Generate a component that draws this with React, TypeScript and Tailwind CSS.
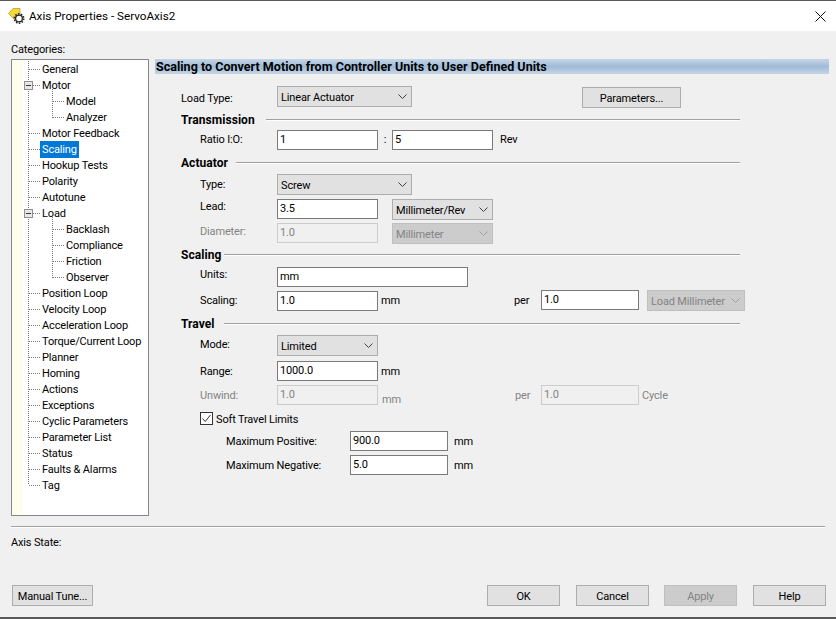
import type { ReactNode } from "react";

const tree = [
  { label: "General", kind: "top" },
  { label: "Motor", kind: "parent" },
  { label: "Model", kind: "child" },
  { label: "Analyzer", kind: "lastChild" },
  { label: "Motor Feedback", kind: "top" },
  { label: "Scaling", kind: "top", selected: true },
  { label: "Hookup Tests", kind: "top" },
  { label: "Polarity", kind: "top" },
  { label: "Autotune", kind: "top" },
  { label: "Load", kind: "parent" },
  { label: "Backlash", kind: "child" },
  { label: "Compliance", kind: "child" },
  { label: "Friction", kind: "child" },
  { label: "Observer", kind: "lastChild" },
  { label: "Position Loop", kind: "top" },
  { label: "Velocity Loop", kind: "top" },
  { label: "Acceleration Loop", kind: "top" },
  { label: "Torque/Current Loop", kind: "top" },
  { label: "Planner", kind: "top" },
  { label: "Homing", kind: "top" },
  { label: "Actions", kind: "top" },
  { label: "Exceptions", kind: "top" },
  { label: "Cyclic Parameters", kind: "top" },
  { label: "Parameter List", kind: "top" },
  { label: "Status", kind: "top" },
  { label: "Faults & Alarms", kind: "top" },
  { label: "Tag", kind: "last" },
];

function Connector({ kind }: { kind: string }) {
  const dots = { stroke: "#7a7a7a", strokeDasharray: "1 1", shapeRendering: "crispEdges" as const };
  const isChild = kind === "child" || kind === "lastChild";
  return (
    <svg width="30" height="16" className="shrink-0">
      <line x1="5.5" y1="0" x2="5.5" y2={kind === "last" ? 8 : 16} {...dots} />
      {!isChild && <line x1="6" y1="8.5" x2="17" y2="8.5" {...dots} />}
      {isChild && <line x1="29.5" y1="0" x2="29.5" y2={kind === "lastChild" ? 9 : 16} {...dots} />}
      {kind === "parent" && <line x1="29.5" y1="12" x2="29.5" y2="16" {...dots} />}
      {kind === "parent" && (
        <g shapeRendering="crispEdges">
          <rect x="1.5" y="4.5" width="8" height="8" fill="#e8e8e8" stroke="#8f8f8f" />
          <line x1="3" y1="8.5" x2="8" y2="8.5" stroke="#333" />
        </g>
      )}
    </svg>
  );
}

function TreeRow({ item }: { item: (typeof tree)[number] }) {
  const isChild = item.kind === "child" || item.kind === "lastChild";
  return (
    <div className="flex h-4 items-center">
      <Connector kind={item.kind} />
      {isChild ? (
        <>
          <span className="h-px w-[11px] shrink-0 border-t border-dotted border-[#7a7a7a]" />
          <span className="pl-[2px] pt-[1px] leading-4">{item.label}</span>
        </>
      ) : item.selected ? (
        <span className="ml-[-13px] bg-[#0078d7] px-[2px] pt-[1px] leading-4 text-white">{item.label}</span>
      ) : (
        <span className="ml-[-13px] px-[2px] pt-[1px] leading-4">{item.label}</span>
      )}
    </div>
  );
}

function Chevron({ color = "#404040" }: { color?: string }) {
  return (
    <svg width="9" height="5" viewBox="0 0 9 5" className="shrink-0">
      <path d="M0.5 0.5L4.5 4.5L8.5 0.5" fill="none" stroke={color} strokeWidth="1" />
    </svg>
  );
}

function Select({ value, className, disabled }: { value: string; className: string; disabled?: boolean }) {
  return (
    <div
      className={`flex h-[21px] shrink-0 items-center justify-between border pl-[3px] pr-[4px] ${className} ${
        disabled ? "border-[#bfbfbf] bg-[#cccccc] text-[#838383]" : "border-[#adadad] bg-[#e1e1e1]"
      }`}
    >
      <span className="mt-[2px]">{value}</span>
      <Chevron color={disabled ? "#a0a0a0" : "#404040"} />
    </div>
  );
}

function Input({ value, className, disabled }: { value: string; className: string; disabled?: boolean }) {
  return (
    <div
      className={`flex h-5 shrink-0 items-center border px-[2px] ${className} ${
        disabled ? "border-[#cccccc] bg-[#f0f0f0] text-[#838383]" : "border-[#7a7a7a] bg-white"
      }`}
    >
      {value}
    </div>
  );
}

function Button({ children, className, disabled }: { children: ReactNode; className: string; disabled?: boolean }) {
  return (
    <div
      className={`flex h-[21px] shrink-0 items-center justify-center border ${className} ${
        disabled ? "border-[#bfbfbf] bg-[#cccccc] text-[#838383]" : "border-[#adadad] bg-[#e1e1e1]"
      }`}
    >
      <span className="mt-[2px]">{children}</span>
    </div>
  );
}

function Heading({ title, titleWidth, className }: { title: string; titleWidth: string; className: string }) {
  return (
    <div className={`flex h-4 items-center pl-[26px] pr-[96px] ${className}`}>
      <span className={`shrink-0 text-[12px] font-bold leading-4 tracking-[0.05px] ${titleWidth}`}>{title}</span>
      <div className="h-[2px] flex-1 border-t border-[#a0a0a0] bg-white" />
    </div>
  );
}

function Label({ text, disabled, className = "" }: { text: string; disabled?: boolean; className?: string }) {
  return (
    <span className={`box-content w-[77px] shrink-0 pl-[45px] ${disabled ? "text-[#838383]" : ""} ${className}`}>
      {text}
    </span>
  );
}

function Row({ className, children }: { className: string; children: ReactNode }) {
  return <div className={`flex items-center ${className}`}>{children}</div>;
}

export default function App() {
  return (
    <div
      className="flex h-[619px] w-[836px] flex-col overflow-hidden whitespace-nowrap bg-[#f0f0f0] text-[11px] leading-4 tracking-[-0.15px] text-black"
      style={{ fontFamily: 'Roboto, "Noto Sans", sans-serif' }}
    >
      {/* title bar */}
      <div className="flex h-[31px] shrink-0 items-center border-t border-[#5a5a5a] bg-white pl-2 pr-[10px]">
        <svg width="17" height="17" viewBox="0 0 17 17" className="shrink-0">
          <path d="M0.5 5.5L5 0.5H12V11H6Z" fill="#f7d83a" stroke="#b8a030" strokeWidth="0.8" />
          <circle cx="11" cy="10.5" r="3.4" fill="#ffffff" stroke="#222" strokeWidth="1.3" />
          <circle cx="11" cy="10.5" r="4.8" fill="none" stroke="#222" strokeWidth="1.4" strokeDasharray="1.5 1.5" />
        </svg>
        <span className="ml-1 text-[11.7px] tracking-normal">Axis Properties - ServoAxis2</span>
        <svg width="11" height="11" viewBox="0 0 11 11" className="ml-auto">
          <path d="M0.5 0.5L10.5 10.5M10.5 0.5L0.5 10.5" stroke="#111" strokeWidth="1" fill="none" />
        </svg>
      </div>

      <div className="flex h-[485px] shrink-0">
        {/* categories */}
        <div className="w-[155px] shrink-0 pl-[11px]">
          <div className="mt-[11px] h-4 leading-4">Categories:</div>
          <div className="mt-[1px] h-[457px] w-[138px] border border-[#828790] bg-white">
            <div className="flex h-full">
              <div className="w-[11px] shrink-0 bg-[#fffdeb]" />
              <div className="pt-[1px]">
                {tree.map((item) => (
                  <TreeRow key={item.label} item={item} />
                ))}
              </div>
            </div>
          </div>
        </div>

        {/* scaling form */}
        <div className="w-[681px] shrink-0">
          <div className="mr-[7px] mt-[28px] h-[15px] bg-gradient-to-b from-[#c6d5e5] via-[#9fbbd8] to-[#c6d5e5] pl-[1px] text-[12.55px] font-bold leading-[15px] tracking-normal">
            Scaling to Convert Motion from Controller Units to User Defined Units
          </div>

          <Row className="mt-[12px] h-[21px]">
            <span className="box-content w-[96px] shrink-0 pl-[26px] pt-[4px]">Load Type:</span>
            <Select value="Linear Actuator" className="w-[135px]" />
            <Button className="ml-[170px] mt-[2px] w-[99px]">Parameters...</Button>
          </Row>
          <Heading title="Transmission" titleWidth="w-[85px]" className="mt-[5px]" />
          <Row className="mt-[2px] h-5">
            <Label text="Ratio I:O:" />
            <Input value="1" className="w-[101px]" />
            <span className="w-[14px] text-center">:</span>
            <Input value="5" className="w-[101px]" />
            <span className="ml-[7px]">Rev</span>
          </Row>
          <Heading title="Actuator" titleWidth="w-[55px]" className="mt-[5px]" />
          <Row className="mt-[3px] h-[21px]">
            <Label text="Type:" />
            <Select value="Screw" className="w-[135px]" />
          </Row>
          <Row className="mt-[4px] h-5">
            <Label text="Lead:" className="-mt-[4px]" />
            <Input value="3.5" className="w-[101px]" />
            <Select value="Millimeter/Rev" className="ml-[14px] mt-[1px] w-[101px]" />
          </Row>
          <Row className="mt-[4px] h-5">
            <Label text="Diameter:" disabled className="-mt-[2px]" />
            <Input value="1.0" className="w-[101px]" disabled />
            <Select value="Millimeter" className="ml-[14px] mt-[1px] w-[101px]" disabled />
          </Row>
          <Heading title="Scaling" titleWidth="w-[43px]" className="mt-[4px]" />
          <Row className="mt-[4px] h-5">
            <Label text="Units:" className="-mt-[4px]" />
            <Input value="mm" className="w-[191px]" />
          </Row>
          <Row className="mt-[4px] h-5">
            <Label text="Scaling:" />
            <Input value="1.0" className="w-[101px]" />
            <span className="ml-[3px] w-[133px]">mm</span>
            <span className="w-[27px]">per</span>
            <Input value="1.0" className="-mt-[2px] w-[98px]" />
            <Select value="Load Millimeter" className="-mt-[1px] ml-[8px] w-[98px]" disabled />
          </Row>
          <Heading title="Travel" titleWidth="w-[43px]" className="mt-[5px]" />
          <Row className="mt-[3px] h-[21px]">
            <Label text="Mode:" className="-mt-[2px]" />
            <Select value="Limited" className="w-[101px]" />
          </Row>
          <Row className="mt-[5px] h-5">
            <Label text="Range:" className="mt-[2px]" />
            <Input value="1000.0" className="w-[101px]" />
            <span className="ml-[3px] mt-[2px]">mm</span>
          </Row>
          <Row className="mt-[4px] h-5">
            <Label text="Unwind:" disabled className="mt-[2px]" />
            <Input value="1.0" className="w-[101px]" disabled />
            <span className="ml-[4px] mt-[10px] w-[133px] text-[#838383]">mm</span>
            <span className="mt-[2px] w-[26px] text-[#838383]">per</span>
            <Input value="1.0" className="w-[98px]" disabled />
            <span className="ml-[3px] mt-[2px] text-[#838383]">Cycle</span>
          </Row>
          <Row className="mt-[7px] h-[13px] pl-[45px]">
            <span className="flex h-[13px] w-[13px] shrink-0 items-center justify-center border border-[#333] bg-white">
              <svg width="11" height="11" viewBox="0 0 11 11">
                <path d="M1.5 5.5L4.2 8.5L9.5 2" fill="none" stroke="#333" strokeWidth="1" />
              </svg>
            </span>
            <span className="ml-[3px] mt-[2px]">Soft Travel Limits</span>
          </Row>
          <Row className="mt-[6px] h-5 pl-[71px]">
            <span className="mt-[2px] w-[124px] shrink-0">Maximum Positive:</span>
            <Input value="900.0" className="w-[98px]" />
            <span className="ml-[6px] mt-[2px]">mm</span>
          </Row>
          <Row className="mt-[4px] h-5 pl-[71px]">
            <span className="mt-[2px] w-[124px] shrink-0">Maximum Negative:</span>
            <Input value="5.0" className="w-[98px]" />
            <span className="ml-[6px] mt-[2px]">mm</span>
          </Row>
        </div>
      </div>

      {/* footer */}
      <div className="mx-[11px] mt-[10px] h-[2px] shrink-0 border-t border-[#a0a0a0] bg-white" />
      <div className="ml-[11px] mt-[7px] h-4 leading-4">Axis State:</div>
      <div className="mt-[34px] flex pl-3">
        <Button className="w-[81px]">Manual Tune...</Button>
        <Button className="ml-[394px] w-[73px]">OK</Button>
        <Button className="ml-[16px] w-[73px]">Cancel</Button>
        <Button className="ml-[15px] w-[73px]" disabled>
          Apply
        </Button>
        <Button className="ml-[16px] w-[73px]">Help</Button>
      </div>
      <div className="mt-auto h-[2px] shrink-0 bg-[#5a5a5a]" />
    </div>
  );
}
